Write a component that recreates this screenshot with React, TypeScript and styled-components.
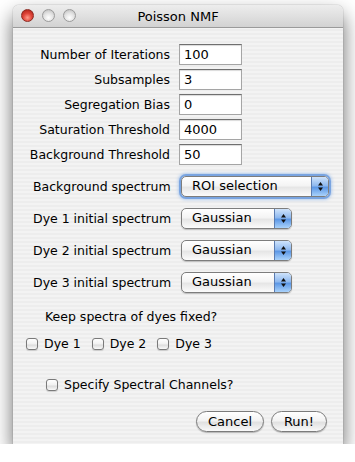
import React from "react";
import styled, {createGlobalStyle} from "styled-components";

const Global = createGlobalStyle`
    html, body {
        margin: 0;
        padding: 0;
        background: #ffffff;
    }
    body {
        font-family: "Lucida Grande", "DejaVu Sans", "Liberation Sans", sans-serif;
        font-size: 12.5px;
        color: #000;
    }
`

const Window = styled.div`
    width: 330px;
    height: 439px;
    margin: 5px 0 0 13px;
    border-radius: 6px 6px 0 0;
    overflow: hidden;
    display: flex;
    flex-direction: column;
    box-shadow: 0 10px 20px rgba(0, 0, 0, 0.6), 0 0 1px rgba(0, 0, 0, 0.6);
    background: repeating-linear-gradient(180deg, #ededed 0, #ededed 2px, #f3f3f3 2px, #f3f3f3 4px);
`

const TitleBar = styled.div`
    height: 22px;
    flex: none;
    position: relative;
    display: flex;
    align-items: center;
    justify-content: center;
    background: linear-gradient(180deg, #ededed 0%, #e0e0e0 50%, #d2d2d2 100%);
    border-bottom: 1px solid #9a9a9a;
    font-size: 13px;
`

const Lights = styled.div`
    position: absolute;
    left: 8px;
    top: 4px;
    display: flex;
    gap: 8px;
`

const Light = styled.span<{$red?: boolean}>`
    width: 13px;
    height: 13px;
    border-radius: 50%;
    box-sizing: border-box;
    border: 1px solid ${p => p.$red ? "#8c2a22" : "#9b9b9b"};
    background: ${p => p.$red
        ? "radial-gradient(circle at 50% 70%, #ff9a8a 0%, #e0463a 45%, #a61a12 100%)"
        : "radial-gradient(circle at 50% 70%, #ffffff 0%, #e2e2e2 50%, #b7b7b7 100%)"};
`

const Body = styled.div`
    flex: 1;
    display: flex;
    flex-direction: column;
    padding: 16px 0 12px;
`

const FieldGrid = styled.div`
    display: grid;
    grid-template-columns: 157px 63px;
    column-gap: 9px;
    row-gap: 4px;
    align-items: center;
`

const FieldLabel = styled.label`
    text-align: right;
    white-space: nowrap;
`

const TextField = styled.div`
    height: 21px;
    box-sizing: border-box;
    background: #fff;
    border: 1px solid #a5a5a5;
    border-top-color: #6f6f6f;
    box-shadow: inset 0 1px 1px rgba(0, 0, 0, 0.15);
    padding: 2px 0 0 4px;
    font-size: 13px;
`

const PopupGrid = styled.div`
    display: grid;
    grid-template-columns: 148px auto;
    row-gap: 11px;
    align-items: center;
    padding-left: 20px;
    margin-top: 11px;
`

const Popup = styled.div<{$width: number; $focus?: boolean}>`
    width: ${p => p.$width}px;
    height: 21px;
    box-sizing: border-box;
    display: flex;
    border-radius: 5px;
    border: 1px solid #7d7d7d;
    overflow: hidden;
    background: linear-gradient(180deg, #ffffff 0%, #f4f4f4 45%, #e6e6e6 55%, #fbfbfb 100%);
    box-shadow: ${p => p.$focus ? "0 0 0 2px rgba(100, 150, 220, 0.75), 0 0 3px 3px rgba(120, 170, 235, 0.5)" : "0 1px 1px rgba(0,0,0,0.2)"};
`

const PopupText = styled.span`
    flex: 1;
    padding: 1px 0 0 10px;
    font-size: 13px;
`

const PopupArrows = styled.span`
    width: 16px;
    display: flex;
    align-items: center;
    justify-content: center;
    border-left: 1px solid #5a7bb0;
    background: linear-gradient(180deg, #cfe3fb 0%, #8fb9ef 45%, #5d98e6 55%, #a9d2fb 100%);
`

const Question = styled.div`
    margin: 16px 0 0 32px;
`

const CheckRow = styled.div<{$indent: number; $top: number}>`
    display: flex;
    gap: 11px;
    padding-left: ${p => p.$indent}px;
    margin-top: ${p => p.$top}px;
`

const CheckItem = styled.label`
    display: flex;
    align-items: center;
    gap: 6px;
`

const Box = styled.span`
    width: 12px;
    height: 12px;
    box-sizing: border-box;
    border-radius: 3px;
    border: 1px solid #7a7a7a;
    background: linear-gradient(180deg, #ffffff 0%, #f1f1f1 50%, #dcdcdc 60%, #fafafa 100%);
    box-shadow: 0 1px 1px rgba(0,0,0,0.15);
`

const Footer = styled.div`
    margin-top: auto;
    display: flex;
    justify-content: flex-end;
    gap: 7px;
    padding-right: 16px;
`

const Button = styled.button<{$width: number}>`
    width: ${p => p.$width}px;
    height: 21px;
    border-radius: 11px;
    border: 1px solid #7b7b7b;
    background: linear-gradient(180deg, #ffffff 0%, #f3f3f3 45%, #e1e1e1 55%, #f9f9f9 100%);
    box-shadow: 0 1px 1px rgba(0,0,0,0.25);
    font-family: inherit;
    font-size: 13px;
    padding: 0;
    color: #000;
`

function Arrows() {
    return (
        <svg width="7" height="11" viewBox="0 0 7 11">
            <path d="M3.5 1 L6 4.5 L1 4.5 Z" fill="#111"/>
            <path d="M3.5 10 L6 6.5 L1 6.5 Z" fill="#111"/>
        </svg>
    )
}

const fields = [
    ["Number of Iterations", "100"],
    ["Subsamples", "3"],
    ["Segregation Bias", "0"],
    ["Saturation Threshold", "4000"],
    ["Background Threshold", "50"],
]

const popups = [
    ["Background spectrum", "ROI selection", 148, true],
    ["Dye 1 initial spectrum", "Gaussian", 111, false],
    ["Dye 2 initial spectrum", "Gaussian", 111, false],
    ["Dye 3 initial spectrum", "Gaussian", 111, false],
] as const

function App() {
    return (
        <>
            <Global/>
            <Window>
                <TitleBar>
                    <Lights>
                        <Light $red/>
                        <Light/>
                        <Light/>
                    </Lights>
                    Poisson NMF
                </TitleBar>
                <Body>
                    <FieldGrid>
                        {fields.map(([label, value]) => (
                            <React.Fragment key={label}>
                                <FieldLabel>{label}</FieldLabel>
                                <TextField>{value}</TextField>
                            </React.Fragment>
                        ))}
                    </FieldGrid>
                    <PopupGrid>
                        {popups.map(([label, value, width, focus]) => (
                            <React.Fragment key={label}>
                                <span>{label}</span>
                                <Popup $width={width} $focus={focus}>
                                    <PopupText>{value}</PopupText>
                                    <PopupArrows><Arrows/></PopupArrows>
                                </Popup>
                            </React.Fragment>
                        ))}
                    </PopupGrid>
                    <Question>Keep spectra of dyes fixed?</Question>
                    <CheckRow $indent={13} $top={12}>
                        <CheckItem><Box/>Dye 1</CheckItem>
                        <CheckItem><Box/>Dye 2</CheckItem>
                        <CheckItem><Box/>Dye 3</CheckItem>
                    </CheckRow>
                    <CheckRow $indent={33} $top={26}>
                        <CheckItem><Box/>Specify Spectral Channels?</CheckItem>
                    </CheckRow>
                    <Footer>
                        <Button $width={68}>Cancel</Button>
                        <Button $width={56}>Run!</Button>
                    </Footer>
                </Body>
            </Window>
        </>
    );
}

export default App;
